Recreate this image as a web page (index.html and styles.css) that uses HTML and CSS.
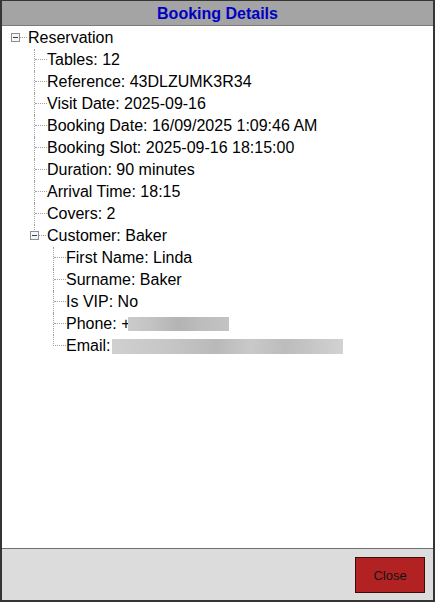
FILE: index.html
```html
<!DOCTYPE html>
<html>
<head>
    <title>Booking Details</title>
    <link rel="stylesheet" href="styles.css">
</head>
<body>
    <div class="window">
        <div class="titlebar">Booking Details</div>
        <div class="content">
            <ul class="tree">
                <li class="node root">
                    <div class="row">
                        <svg class="expander" width="17" height="22" viewBox="0 0 17 22">
                            <rect x="0.5" y="6.5" width="8" height="8" fill="#f6f6f6" stroke="#8e8e8e"/>
                            <line x1="2" y1="10.5" x2="7" y2="10.5" stroke="#26406a"/>
                            <line x1="9" y1="10.5" x2="17" y2="10.5" stroke="#a0a0a0" stroke-dasharray="1 1"/>
                        </svg>
                        <span class="label">Reservation</span>
                    </div>
                    <ul class="children">
                        <li><div class="row"><span class="elbow"></span><span class="label">Tables: 12</span></div></li>
                        <li><div class="row"><span class="elbow"></span><span class="label">Reference: 43DLZUMK3R34</span></div></li>
                        <li><div class="row"><span class="elbow"></span><span class="label">Visit Date: 2025-09-16</span></div></li>
                        <li><div class="row"><span class="elbow"></span><span class="label">Booking Date: 16/09/2025 1:09:46 AM</span></div></li>
                        <li><div class="row"><span class="elbow"></span><span class="label">Booking Slot: 2025-09-16 18:15:00</span></div></li>
                        <li><div class="row"><span class="elbow"></span><span class="label">Duration: 90 minutes</span></div></li>
                        <li><div class="row"><span class="elbow"></span><span class="label">Arrival Time: 18:15</span></div></li>
                        <li><div class="row"><span class="elbow"></span><span class="label">Covers: 2</span></div></li>
                        <li class="node customer">
                            <div class="row">
                                <svg class="expander" width="17" height="22" viewBox="0 0 17 22">
                                    <line x1="4.5" y1="0" x2="4.5" y2="6" stroke="#a0a0a0" stroke-dasharray="1 1"/>
                                    <rect x="0.5" y="6.5" width="8" height="8" fill="#f6f6f6" stroke="#8e8e8e"/>
                                    <line x1="2" y1="10.5" x2="7" y2="10.5" stroke="#26406a"/>
                                    <line x1="9" y1="10.5" x2="17" y2="10.5" stroke="#a0a0a0" stroke-dasharray="1 1"/>
                                </svg>
                                <span class="label">Customer: Baker</span>
                            </div>
                            <ul class="children">
                                <li><div class="row"><span class="elbow"></span><span class="label">First Name: Linda</span></div></li>
                                <li><div class="row"><span class="elbow"></span><span class="label">Surname: Baker</span></div></li>
                                <li><div class="row"><span class="elbow"></span><span class="label">Is VIP: No</span></div></li>
                                <li><div class="row"><span class="elbow"></span><span class="label">Phone: +</span><span class="redacted phone"></span></div></li>
                                <li><div class="row"><span class="elbow"></span><span class="label">Email:</span><span class="redacted email"></span></div></li>
                            </ul>
                        </li>
                    </ul>
                </li>
            </ul>
        </div>
        <div class="footer">
            <button class="close-btn">Close</button>
        </div>
    </div>
</body>
</html>
```

FILE: styles.css
```css
body {
    margin: 0;
    font-family: 'Liberation Sans', Arial, sans-serif;
    background-color: #ffffff;
}
.window {
    width: 435px;
    height: 602px;
    box-sizing: border-box;
    border: 2px solid #353535;
    border-top-width: 1px;
    display: flex;
    flex-direction: column;
}
.titlebar {
    height: 24px;
    line-height: 25px;
    background-color: #a4a4a4;
    border-bottom: 1px solid #7b7b7b;
    color: #0000c4;
    font-weight: bold;
    font-size: 16px;
    text-align: center;
}
.content {
    flex: 1;
    background-color: #ffffff;
    overflow: hidden;
}
.tree,
.children {
    list-style: none;
    margin: 0;
    padding: 0;
}
.tree {
    padding: 1px 0 0 9px;
}
.row {
    display: flex;
    align-items: center;
    height: 22px;
    white-space: nowrap;
    font-size: 16px;
    color: #000000;
}
.expander {
    flex-shrink: 0;
    display: block;
    shape-rendering: crispEdges;
}
.root > .children {
    margin-left: 23px;
}
.customer > .row > .expander {
    margin-left: -5px;
}
.customer > .children {
    margin-left: 18px;
}
.children > li {
    border-left: 1px dotted #a0a0a0;
}
.children > li:last-child {
    border-left-color: transparent;
}
.elbow {
    flex-shrink: 0;
    align-self: flex-start;
    box-sizing: border-box;
    width: 12px;
    height: 11px;
    border-bottom: 1px dotted #a0a0a0;
}
.children > li:last-child > .row > .elbow {
    width: 13px;
    margin-left: -1px;
    border-left: 1px dotted #a0a0a0;
}
.redacted {
    display: inline-block;
    height: 14px;
    filter: blur(0.6px);
}
.phone {
    width: 101px;
    margin-left: -3px;
    background: linear-gradient(90deg, #cbcbcb 0%, #c2c2c2 25%, #b3b3b3 50%, #bcbcbc 70%, #c3c3c3 100%);
}
.email {
    width: 231px;
    height: 15px;
    margin-left: 2px;
    background: linear-gradient(90deg, #d0d0d0 0%, #c6c6c6 25%, #b9b9b9 45%, #c9c9c9 60%, #bcbcbc 75%, #d2d2d2 100%);
}
.footer {
    height: 52px;
    box-sizing: border-box;
    border-top: 1px solid #707070;
    background-color: #dcdcdc;
    display: flex;
    justify-content: flex-end;
    align-items: flex-start;
    padding: 8px 8px 0 0;
}
.close-btn {
    width: 70px;
    height: 36px;
    padding: 0;
    background-color: #b22222;
    border: 1px solid #3e0b0b;
    color: #141414;
    font-family: 'Liberation Sans', Arial, sans-serif;
    font-size: 13px;
    cursor: pointer;
}
```
